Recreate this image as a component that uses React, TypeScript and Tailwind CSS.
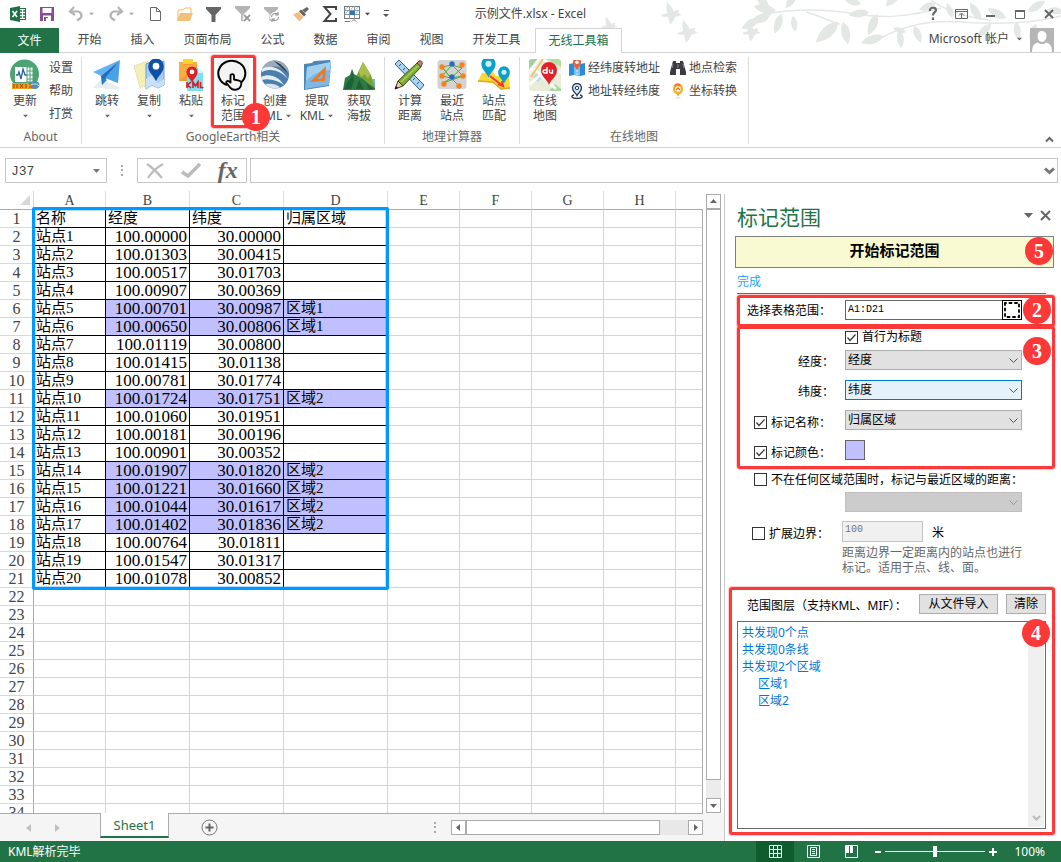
import type { ReactNode } from "react";
import clsx from "clsx";

/* ---------- small shared pieces ---------- */

function Caret({ className = "text-[#666]" }: { className?: string }) {
  return (
    <svg width="7" height="4" viewBox="0 0 7 4" className={className} fill="currentColor" aria-hidden="true">
      <path d="M0 0h7L3.500 4z" />
    </svg>
  );
}

function Badge({ n, className }: { n: number; className: string }) {
  return (
    <span
      className={clsx(
        "absolute z-20 flex size-7 items-center justify-center rounded-full bg-[#fc3838] font-['Liberation_Serif',serif] text-[20px] leading-none font-bold text-white",
        className,
      )}
    >
      {n}
    </span>
  );
}

function Svg({ s = 16, vb, children }: { s?: number; vb?: number; children: ReactNode }) {
  const box = vb ?? s;
  return (
    <svg width={s} height={s} viewBox={`0 0 ${box} ${box}`} fill="none" className="block shrink-0" aria-hidden="true">
      {children}
    </svg>
  );
}

/* ---------- title bar ---------- */

const Funnel = ({ c }: { c: string }) => <path d="M0 1h15v2L9.500 9v7h-4V9L0 3z" fill={c} />;

const qatIcons: { name: string; icon: ReactNode; w: string; caret?: string }[] = [
  {
    name: "Excel",
    w: "w-[30px] pl-[8px]",
    icon: (
      <Svg>
        <rect x="8.500" y="2.500" width="7" height="11" fill="#fff" stroke="#217346" />
        <path d="M10 5h2M13 5h2M10 8h2M13 8h2M10 11h2M13 11h2" stroke="#217346" strokeWidth="1.500" />
        <path d="M0 2l10-2v16L0 14z" fill="#1e7145" />
        <path d="M2.500 5l4.500 6M7 5l-4.500 6" stroke="#fff" strokeWidth="1.600" />
      </Svg>
    ),
  },
  {
    name: "保存",
    w: "w-[30px] pl-[8px]",
    icon: (
      <Svg>
        <path d="M0 1h14v14H0z" fill="#8a4a9e" />
        <path d="M2.500 2h9v5h-9zM3 9.500h8V15H3z" fill="#fff" />
        <path d="M4 11h4v4H4z" fill="#8a4a9e" />
        <path d="M6 12h2v3H6z" fill="#fff" />
      </Svg>
    ),
  },
  {
    name: "撤消",
    w: "w-[40px] pl-[6px]",
    caret: "text-[#aaa]",
    icon: (
      <Svg>
        <path d="M6 1L2 5.500 7 9M2.500 5.500H10a4 4 0 0 1 2 7l-3 2" stroke="#b4b4b4" strokeWidth="2.200" />
      </Svg>
    ),
  },
  {
    name: "恢复",
    w: "w-[39px] pl-[6px]",
    caret: "text-[#aaa]",
    icon: (
      <Svg>
        <path d="M10 1l4 4.500L9 9M13.500 5.500H6a4 4 0 0 0-2 7l3 2" stroke="#b4b4b4" strokeWidth="2.200" />
      </Svg>
    ),
  },
  {
    name: "新建",
    w: "w-[29px] pl-[7px]",
    icon: (
      <Svg>
        <path d="M2.500 1.500h6l4 4v9h-10zM8.500 1.500v4h4" fill="#fff" stroke="#666" />
      </Svg>
    ),
  },
  {
    name: "打开",
    w: "w-[29px] pl-[7px]",
    icon: (
      <Svg>
        <path d="M1 14V4h5l2-2h6v5" fill="#fff" stroke="#f0b869" />
        <path d="M0 15l3-8h13l-3 8z" fill="#f2c078" />
      </Svg>
    ),
  },
  { name: "筛选", w: "w-[29px] pl-[7px]", icon: <Svg><Funnel c="#666" /></Svg> },
  {
    name: "清除筛选",
    w: "w-[29px] pl-[7px]",
    icon: (
      <Svg>
        <path d="M0 0h15v2L9 8v7H6V8L0 2z" fill="#b4b4b4" />
        <path d="M8.500 8.500l6 6M14.500 8.500l-6 6" stroke="#fff" strokeWidth="4" />
        <path d="M9 9l6 6M15 9l-6 6" stroke="#999" strokeWidth="1.800" />
      </Svg>
    ),
  },
  {
    name: "重新应用",
    w: "w-[29px] pl-[7px]",
    icon: (
      <Svg>
        <path d="M0 1h14v2L8.500 8v7h-3V8L0 3z" fill="#b4b4b4" />
        <circle cx="11" cy="11" r="5" fill="#fff" />
        <path d="M7.500 11a3.500 3.500 0 0 1 6-2.500M14.500 11a3.500 3.500 0 0 1-6 2.500M14 6v3h-3M8 16v-3h3" stroke="#999" strokeWidth="1.200" />
      </Svg>
    ),
  },
  {
    name: "格式刷",
    w: "w-[29px] pl-[7px]",
    icon: (
      <Svg>
        <path d="M14 1l2 2-4 4-3-3z" fill="#6a6a6a" />
        <path d="M8 3.500l5 5-2 2-5-5z" fill="#6a5a50" />
        <path d="M5.500 6l5 5-4 4.500L0 8.500z" fill="#f0bd82" />
      </Svg>
    ),
  },
  {
    name: "求和",
    w: "w-[29px] pl-[7px]",
    icon: (
      <Svg>
        <path d="M14 4V1H2.500l6 7-6 7H14v-3" stroke="#444" strokeWidth="2" />
      </Svg>
    ),
  },
  {
    name: "表格",
    w: "w-[29px]",
    caret: "text-[#444]",
    icon: (
      <Svg>
        <rect x="0.500" y="0.500" width="15" height="12" fill="#fff" stroke="#777" />
        <path d="M0 4.500h16M0 8.500h16M5.500 0v13M10.500 0v13" stroke="#8a97a5" />
        <path d="M1 3.500L4 1M6.500 3.500L9.500 1M11.500 3.500L14.500 1M1 7.500L4 5M11.500 7.500L14.500 5" stroke="#8db6dc" />
        <rect x="6" y="5" width="5" height="4" fill="#2e75b6" />
        <path d="M1 15.500h5M8 15.500l2-2 2 2" stroke="#777" />
      </Svg>
    ),
  },
];

const leaves: [number, number, number, number][] = [
  [195, 11, 195, 1], [190, 14, 160, 1], [188, 10, 235, 0.9], [200, 14, 110, 0.9], [212, 16, 85, 0.7], [205, 8, 310, 0.8],
  [178, 18, 150, 0.9], [257, 22, 140, 1.3], [262, 22, 80, 1], [296, 14, 115, 1], [288, 12, 175, 0.9], [280, 4, 200, 0.8],
  [305, 6, 320, 0.9], [302, 36, 165, 1], [318, 30, 85, 0.8], [333, 26, 70, 0.8], [325, 32, 200, 0.6], [355, 3, 160, 0.8],
  [372, 18, 250, 0.7], [400, 20, 240, 0.9], [410, 24, 140, 0.8], [425, 18, 210, 0.9], [435, 22, 85, 0.8], [447, 12, 330, 0.9],
  [466, 10, 10, 0.8], [455, 24, 115, 0.7],
];

const birds: [number, number, number][] = [[28, 26, 0.7], [90, 14, 0.9], [106, 32, 0.9], [170, 32, 0.8]];

function Foliage() {
  return (
    <svg
      className="pointer-events-none absolute top-0 right-0"
      width="480"
      height="50"
      viewBox="0 0 480 50"
      fill="none"
      aria-hidden="true"
    >
      <path d="M185 14c30-6 60-5 90 0s55 2 85-6M300 38c22-12 50-18 80-16s70 2 100-6M225 12c20 6 30 12 34 12M350 0c20 14 40 18 60 20" stroke="#e3e8e5" strokeWidth="1.500" />
      {leaves.map(([x, y, r, s], i) => (
        <path key={i} d="M0 0C5-6 14-7 23-1 15 5 6 5 0 0z" fill="#e3e8e5" transform={`translate(${x} ${y}) rotate(${r}) scale(${s})`} />
      ))}
      {birds.map(([x, y, s], i) => (
        <path
          key={i}
          d="M-11 1L-4-1C-5-5-6-9-4-13-1-10 2-6 3-3L9-5 8-1 12 1 5 3C3 7 1 10-1 12-2 9-3 6-3 3L-9 3z"
          fill="#e3e8e5"
          transform={`translate(${x} ${y}) scale(${s})`}
        />
      ))}
    </svg>
  );
}

function TitleBar() {
  return (
    <div className="relative grid h-7 grid-cols-[1fr_auto_1fr] items-center">
      <div className="flex items-center pl-[2px]">
        {qatIcons.map((q) => (
          <button key={q.name} type="button" aria-label={q.name} className={clsx("flex items-center gap-[4px]", q.w)}>
            {q.icon}
            {q.caret && <span className="scale-75"><Caret className={q.caret} /></span>}
          </button>
        ))}
        <button type="button" aria-label="自定义快速访问工具栏" className="ml-[10px]">
          <svg width="7" height="8" viewBox="0 0 7 8" fill="#555" aria-hidden="true"><path d="M1 0h5v1H1zM0 4h6L3 7z" /></svg>
        </button>
      </div>
      <h1 className="text-[12px] leading-4 text-[#444]">示例文件.xlsx - Excel</h1>
      <div className="flex justify-end text-[#555]">
        <button type="button" aria-label="帮助" className="flex h-4 w-[29px] justify-center">
          <Svg><path d="M5 5V4c0-3 6-3 6 0 0 2.500-3 2-3 5.500M8 11.500V14" stroke="#666" strokeWidth="2.200" /></Svg>
        </button>
        <button type="button" aria-label="功能区显示选项" className="flex h-4 w-[29px] justify-center">
          <Svg><path d="M1.500 3.500h12v9h-12zM1.500 5.500h12M7.500 12V8M5 9.500L7.500 7 10 9.500" stroke="#666" /></Svg>
        </button>
        <button type="button" aria-label="最小化" className="flex h-4 w-[29px] justify-center">
          <Svg><path d="M3 10h9" stroke="#666" strokeWidth="2" /></Svg>
        </button>
        <button type="button" aria-label="最大化" className="flex h-4 w-[29px] justify-center">
          <Svg><path d="M3.500 4.500h9v8h-9z" stroke="#666" /><path d="M3 4h10v2H3z" fill="#666" /></Svg>
        </button>
        <button type="button" aria-label="关闭" className="flex h-4 w-[27px] justify-center">
          <Svg><path d="M5 4l8 8M13 4l-8 8" stroke="#666" strokeWidth="2" /></Svg>
        </button>
      </div>
    </div>
  );
}

const tabs = ["开始", "插入", "页面布局", "公式", "数据", "审阅", "视图", "开发工具"];

function TabRow() {
  return (
    <div className="relative flex h-[25px] text-[12px] leading-4 text-[#444]">
      <button type="button" className="w-[59px] bg-[#217346] text-white">文件</button>
      <div className="flex grow border-b border-[#d4d4d4] pl-[4px]">
        {tabs.map((t) => (
          <button key={t} type="button" className={t.length > 2 ? "w-[77px]" : "w-[53px]"}>{t}</button>
        ))}
        <button type="button" className="-mb-px w-[87px] border border-b-0 border-[#d4d4d4] bg-white text-[#217346]">无线工具箱</button>
        <div className="ml-auto flex items-center">
          <button type="button" className="flex items-center gap-[7px] pb-[2px]">Microsoft 帐户 <span className="scale-75"><Caret /></span></button>
          <svg className="mr-[7px] ml-[7px]" width="24" height="24" viewBox="0 0 24 24" aria-hidden="true">
            <rect width="24" height="24" fill="#b5b5b5" />
            <path d="M12 3c3 0 4.500 2.200 4.500 5S14.500 14 12 14s-4.500-3-4.500-6S9 3 12 3zM2 24c0-6 2-8.500 6-9.500 2 2 6 2 8 0 4 1 6 3.500 6 9.500z" fill="#fff" />
          </svg>
        </div>
      </div>
    </div>
  );
}

/* ---------- ribbon ---------- */

const Pin = ({ x, y, s = 1, c = "#1c9bd7", d = "#fff" }: { x: number; y: number; s?: number; c?: string; d?: string }) => (
  <g transform={`translate(${x} ${y}) scale(${s})`}>
    <path d="M0 16C-2 11-6.500 9-6.500 3.500a6.500 6.500 0 0 1 13 0C6.500 9 2 11 0 16z" fill={c} />
    <circle cx="0" cy="3.500" r="2.800" fill={d} />
  </g>
);

const icons = {
  update: (
    <Svg s={32}>
      <circle cx="15.500" cy="15" r="14.500" fill="#4ba471" />
      <rect x="6" y="8" width="13" height="15" fill="#fff" />
      <path d="M7 16h2l1-3 2 7 2-10 2 6h2" stroke="#2c5f9e" strokeWidth="1.300" />
      <path d="M18 8h6v15h-6zM18 12h6M18 16h6M18 20h6M21 8v15" fill="#fff" stroke="#4ba471" />
      <path d="M3 24h22v6H3z" fill="#f19a1c" />
      <path d="M5 25v4M8 25v4M11 25l3 4M14 25l-3 4M17 25v4M20 25h3M20 28h3" stroke="#8b4d15" />
      <ellipse cx="26" cy="26" rx="4.500" ry="4" fill="#4e8fb5" />
      <path d="M22 26c3-2 6-1 8 1" stroke="#dceaf2" />
    </Svg>
  ),
  plane: (
    <Svg s={32}>
      <path d="M2 29l8-9 20 9zM18 23l12 7H14z" fill="#e7edf2" />
      <path d="M29 1L2 13l8 4z" fill="#62b5f4" />
      <path d="M29 1L10 17l1 9 4-6z" fill="#1f6fb9" />
      <path d="M29 1L14 19l13 5z" fill="#4aa1e8" />
      <path d="M11 26l1-7 4 2z" fill="#2c7fca" />
    </Svg>
  ),
  copy: (
    <Svg s={32}>
      <path d="M1 7l14-5 5 22-13 5z" fill="#f3f0b4" stroke="#cfcf9a" strokeDasharray="1 1" />
      <path d="M13 5l6-2 5 2 7-3v24l-6 3-6-3-6 4z" fill="#a9cdf0" stroke="#6f9fd0" />
      <path d="M13 20l6-4 6 8 6-4v6l-6 3-6-3-6 4z" fill="#c9e0f6" />
      <Pin x={23} y={3} s={1.2} c="#0f51a8" />
    </Svg>
  ),
  paste: (
    <Svg s={32}>
      <path d="M4 3h18v19H4z" fill="#f39a3a" />
      <path d="M4 3h4v3h10V3h4v3L4 22z" fill="#f8ae3f" />
      <path d="M8 0h10v5H8z" fill="#fdd425" />
      <path d="M12 9h11l5 5v18H12z" fill="#7be0f3" />
      <path d="M23 9v5h5z" fill="#d9f7fd" />
      <Pin x={17} y={10} s={0.85} c="#dd1f26" />
      <path d="M12 23v6M16 23l-3.500 3 3.500 3M18 29v-6l2.500 4 2.500-4v6M25.500 23v5.500h3" stroke="#d71920" strokeWidth="1.600" />
    </Svg>
  ),
  hand: (
    <Svg s={32}>
      <rect width="32" height="32" fill="#f3f3f3" />
      <path d="M10 26A13.500 12.500 0 1 1 24 23.500" stroke="#000" strokeWidth="2" />
      <path d="M13.500 23.500v-6.500c0-2.500 3.500-2.500 3.500 0v3.500l5 1.200c2.500.8 2.800 2.300 1.800 5.300-1.300 4-7.300 5-10.300 2l-4-5c-1-2 1.500-3 4-.5z" stroke="#000" strokeWidth="1.800" strokeLinejoin="round" />
    </Svg>
  ),
  earth: (
    <Svg s={32}>
      <circle cx="16" cy="15.500" r="14" fill="#4a7fae" />
      <path d="M2 14C4 5 10 1 16 1.500 24 2 29 7 30 14 20 4 9 7 2 14z" fill="#9dabb8" />
      <path d="M3 10c8-5 19-1 26 10-8-9-18-11-26-7z" fill="#e6eef5" />
      <path d="M2 18c8-4 17-1 23 8-7-5-16-7-22-5z" fill="#e6eef5" />
      <path d="M6 25c6-1 11 0 15 3-5 3-12 1-15-3z" fill="#dbe7f0" />
      <path d="M15 2c6 2 11 7 14 12l-6-5z" fill="#24364a" />
    </Svg>
  ),
  extract: (
    <Svg s={32}>
      <path d="M3 5l8-1 2-2 16-1 1 4-2 22-25 4z" fill="#4c87b5" />
      <path d="M6 8l24-5-2 23-24 4z" fill="#7fb8e4" />
      <path d="M6 8l24-5-1 8C18 12 10 16 5 22z" fill="#a0cff0" />
      <path fillRule="evenodd" d="M25 7L9 23l15-1zM22 14l-1 5.500-5 .5z" fill="#e87a28" />
    </Svg>
  ),
  mountain: (
    <Svg s={32}>
      <path d="M17 20h15v9l-15 1z" fill="#6dc1de" />
      <path d="M20 3l8 13 4 12H8z" fill="#7da238" />
      <path d="M20 3l-4 10 2 5 4-3 3 5 2-5z" fill="#a9c04a" />
      <path d="M9 10l2 5 5 3 4 2 6 5 6 4v2H0l2-12 5-3z" fill="#2d7a43" />
      <path d="M9 10l-1 9-4 5-3 6h7l3-8zM16 21l-3 9h8zM24 24l1 6h5z" fill="#1f6136" />
    </Svg>
  ),
  ruler: (
    <Svg s={32}>
      <path d="M1 5l4-4 25 25-4 5z" fill="#a8d3f3" stroke="#2c5c88" />
      <path d="M5 7l2-2M9 11l2-2M13 15l2-2M19 21l2-2M23 25l2-2" stroke="#2c5c88" />
      <path d="M4 22L23 4l4 4L9 27z" fill="#7cab2e" stroke="#3b4a1a" />
      <path d="M23 4l2-2c2-1 4 1 3 3l-1 3z" fill="#c98258" stroke="#543" />
      <path d="M4 22l-3 8 8-3z" fill="#edc7a0" stroke="#333" />
      <path d="M2 27l-1 3 3-1z" fill="#111" />
      <path d="M7 23L24 7" stroke="#a8ce5c" strokeWidth="1.500" />
    </Svg>
  ),
  network: (
    <Svg s={32}>
      <rect x="1.500" y="1" width="29" height="29" rx="3" fill="#d3d3d3" />
      <path d="M6 8l10-2 10 3M6 8l9 11 11-10M16 6L6 17l9 2 12-2M16 6l11 11-20 7 8-5 8 8M6 8l9 11" stroke="#5aa83c" strokeWidth="1" />
      <g fill="#f5811f"><circle cx="6" cy="8" r="2.700" /><circle cx="26" cy="6" r="2.700" /><circle cx="6" cy="17" r="2.700" /><circle cx="27" cy="17" r="2.700" /><circle cx="8" cy="25" r="2.700" /><circle cx="23" cy="27" r="2.700" /></g>
      <g fill="#1f6fc5"><circle cx="16" cy="5" r="2.700" /><circle cx="16" cy="18" r="2.700" /></g>
    </Svg>
  ),
  match: (
    <Svg s={32}>
      <path d="M4 14l11-1 3 4 13-1 1 13-9 2-8-7-15-2z" fill="#fdd835" />
      <path d="M0 22l15 1 8 7 9-1" stroke="#e0aa20" strokeWidth="1.500" />
      <path d="M12 17l13 10M20 25l5 2-1-5" stroke="#e8403a" strokeWidth="2.200" />
      <Pin x={10.500} y={1} s={1.100} c="#0aa0c9" d="#cdf0fa" />
      <Pin x={26} y={10} s={0.900} c="#0aa0c9" d="#cdf0fa" />
    </Svg>
  ),
  online: (
    <Svg s={32}>
      <rect width="32" height="32" rx="2" fill="#e9ecd8" />
      <path d="M0 3c0-2 1-3 3-3h6L0 10z" fill="#9fd2a0" />
      <path d="M17 0h12c2 0 3 1 3 3v5z" fill="#b5dfa0" />
      <path d="M20 32l6-7 6 5v2z" fill="#a5d99a" />
      <path d="M4 18l5-6 5 5-5 6z" fill="#b9d8f2" />
      <path d="M10 0L0 14M5 10l22 20M0 26l16-14M14 0l18 14" stroke="#fff" strokeWidth="2.500" />
      <path d="M14 0L2 18" stroke="#f3bf52" strokeWidth="1.500" />
      <path d="M20 26c-2-6-8-8-8-15a8 8 0 0 1 16 0c0 7-6 9-8 15z" fill="#e0232b" />
      <path d="M18 8v6h-2.500a1.500 1.500 0 0 1 0-3H18M20.500 10.500V13c0 1 1 1 2 1h1v-3.500" stroke="#fff" strokeWidth="1.400" />
    </Svg>
  ),
  mapPin: (
    <Svg>
      <path d="M0 4l5-1 6 1 5-1v12l-5 1-6-1-5 1z" fill="#2b8cd6" />
      <path d="M5 3l6 1v12l-6-1z" fill="#79c0ee" />
      <path d="M8 4v12" stroke="#eef" strokeDasharray="2 1" />
      <Pin x={8} y={0} s={0.620} c="#e9603c" />
    </Svg>
  ),
  geo: (
    <Svg>
      <path d="M8 12.500C7 10 3.500 8.500 3.500 5a4.500 4.500 0 0 1 9 0c0 3.500-3.500 5-4.500 7.500z" fill="#cfe6fa" stroke="#2a3b55" strokeWidth="1.300" />
      <circle cx="8" cy="5" r="1.700" fill="#fff" stroke="#2a3b55" />
      <path d="M5 12c-4 1-2 3.500 3 3.500s7-2.500 3-3.500" stroke="#2a3b55" strokeWidth="1.300" />
    </Svg>
  ),
  binoculars: (
    <Svg>
      <path d="M3 1h3v2h4V1h3l3 11v3h-6V9H6v6H0v-3z" fill="#3c3c40" />
      <path d="M2 8l1-4M14 8l-1-4M8 4v4" stroke="#8a8a92" />
    </Svg>
  ),
  convert: (
    <Svg>
      <path d="M8 13.500l-2.500-4h5z" fill="#f5a623" />
      <circle cx="8" cy="6" r="4" fill="#fff" stroke="#f6b02b" strokeWidth="2.400" />
      <path d="M4.500 3a4.500 4.500 0 0 1 6-.5" stroke="#ee7b1f" strokeWidth="2.200" />
      <path d="M6 7l2-2 2 2" stroke="#ee6b1f" strokeWidth="1.400" />
      <ellipse cx="8" cy="15" rx="3" ry="0.700" fill="#ddd" />
    </Svg>
  ),
};

function BigButton({ icon, label, second, caret }: { icon: ReactNode; label: string; second?: string; caret?: boolean }) {
  return (
    <button type="button" className="flex w-[42px] flex-col items-center">
      {icon}
      <span className="mt-[2px] whitespace-nowrap">{label}</span>
      <span className="flex h-[15px] items-center gap-[3px] whitespace-nowrap">
        {second}
        {caret && <span className="scale-75"><Caret /></span>}
      </span>
    </button>
  );
}

function Group({ title, className, children }: { title: string; className?: string; children: ReactNode }) {
  return (
    <section className={clsx("my-[4px] flex h-[87px] flex-col border-r border-[#dcdcdc] px-[4px]", className)}>
      <div className="flex grow pt-[2px]">{children}</div>
      <h2 className="text-center leading-[14px] text-[#666]">{title}</h2>
    </section>
  );
}

function SmallButton({ icon, label }: { icon: ReactNode; label: string }) {
  return (
    <button type="button" className="flex h-[17px] items-center gap-[3px] whitespace-nowrap">
      {icon}
      {label}
    </button>
  );
}

function Ribbon() {
  return (
    <div className="relative flex h-[95px] border-b border-[#d4d4d4] text-[12px] leading-[15px] text-[#444]">
      <Group title="About" className="w-[82px]">
        <BigButton icon={icons.update} label="更新" caret />
        <div className="flex flex-col gap-[8px] pt-[1px] pl-[3px]">
          <button type="button">设置</button>
          <button type="button">帮助</button>
          <button type="button">打赏</button>
        </div>
      </Group>
      <Group title="GoogleEarth相关" className="w-[303px]">
        <BigButton icon={icons.plane} label="跳转" caret />
        <BigButton icon={icons.copy} label="复制" caret />
        <BigButton icon={icons.paste} label="粘贴" caret />
        <div className="relative">
          <BigButton icon={icons.hand} label="标记" second="范围" />
          <span className="absolute -top-[4px] -left-[1px] h-[73px] w-[45px] rounded-[3px] border-3 border-[#fc3838] ring-1 ring-[#fc3838]/25" />
          <Badge n={1} className="top-[44px] left-[30px]" />
        </div>
        <BigButton icon={icons.earth} label="创建" second="KML" caret />
        <BigButton icon={icons.extract} label="提取" second="KML" caret />
        <BigButton icon={icons.mountain} label="获取" second="海拔" />
      </Group>
      <Group title="地理计算器" className="w-[135px]">
        <BigButton icon={icons.ruler} label="计算" second="距离" />
        <BigButton icon={icons.network} label="最近" second="站点" />
        <BigButton icon={icons.match} label="站点" second="匹配" />
      </Group>
      <Group title="在线地图" className="w-[229px]">
        <BigButton icon={icons.online} label="在线" second="地图" />
        <div className="ml-[3px] flex gap-[10px]">
          <div className="flex flex-col gap-[6px]">
            <SmallButton icon={icons.mapPin} label="经纬度转地址" />
            <SmallButton icon={icons.geo} label="地址转经纬度" />
          </div>
          <div className="flex flex-col gap-[6px]">
            <SmallButton icon={icons.binoculars} label="地点检索" />
            <SmallButton icon={icons.convert} label="坐标转换" />
          </div>
        </div>
      </Group>
      <button type="button" aria-label="折叠功能区" className="mt-auto mr-[7px] mb-[4px] ml-auto">
        <svg width="9" height="7" viewBox="0 0 9 7" fill="none" aria-hidden="true"><path d="M1 5.500L4.500 2 8 5.500" stroke="#666" strokeWidth="2" /></svg>
      </button>
    </div>
  );
}

/* ---------- formula bar ---------- */

function Dots() {
  return (
    <svg width="2" height="11" viewBox="0 0 2 11" fill="#aaa" className="shrink-0" aria-hidden="true">
      <path d="M0 0h2v2H0zM0 4h2v2H0zM0 9h2v2H0z" />
    </svg>
  );
}

function FormulaBar() {
  return (
    <div className="flex h-[43px] items-start pt-[10px] pr-[3px] pl-[5px]">
      <div className="flex h-[25px] w-[102px] items-center border border-[#c6c6c6] pr-[6px] pl-[5px]">
        <input aria-label="名称框" defaultValue="J37" className="w-full min-w-0 pt-[2px] font-['Liberation_Mono',monospace] text-[13px] leading-4 text-[#444] outline-none" />
        <Caret className="shrink-0 text-[#777]" />
      </div>
      <div className="flex h-[25px] w-[30px] items-center justify-center"><Dots /></div>
      <div className="flex h-[25px] w-[110px] items-center justify-around border border-[#c6c6c6]">
        <button type="button" aria-label="取消"><svg width="18" height="16" viewBox="0 0 18 16" fill="none" aria-hidden="true"><path d="M1 1c6 4 11 9 15 14M17 1C10 5 5 10 2 15" stroke="#bcbcbc" strokeWidth="2.200" /></svg></button>
        <button type="button" aria-label="输入"><svg width="20" height="16" viewBox="0 0 20 16" fill="none" aria-hidden="true"><path d="M1 9l6 4L19 1" stroke="#bcbcbc" strokeWidth="3.500" /></svg></button>
        <button type="button" aria-label="插入函数" className="pb-[2px] font-['Liberation_Serif',serif] text-[24px] leading-[22px] font-bold text-[#666] italic">fx</button>
      </div>
      <div className="ml-[3px] flex h-[25px] grow items-center border border-[#c6c6c6] pr-[2px]">
        <input aria-label="编辑栏" className="min-w-0 grow px-1 text-[13px] outline-none" />
        <svg width="11" height="8" viewBox="0 0 11 8" fill="none" aria-hidden="true"><path d="M1 1.500l4.500 4L10 1.500" stroke="#777" strokeWidth="3" /></svg>
      </div>
    </div>
  );
}

/* ---------- worksheet ---------- */

const stations: [string, string, string][] = [
  ["100.00000", "30.00000", ""],
  ["100.01303", "30.00415", ""],
  ["100.00517", "30.01703", ""],
  ["100.00907", "30.00369", ""],
  ["100.00701", "30.00987", "区域1"],
  ["100.00650", "30.00806", "区域1"],
  ["100.01119", "30.00800", ""],
  ["100.01415", "30.01138", ""],
  ["100.00781", "30.01774", ""],
  ["100.01724", "30.01751", "区域2"],
  ["100.01060", "30.01951", ""],
  ["100.00181", "30.00196", ""],
  ["100.00901", "30.00352", ""],
  ["100.01907", "30.01820", "区域2"],
  ["100.01221", "30.01660", "区域2"],
  ["100.01044", "30.01617", "区域2"],
  ["100.01402", "30.01836", "区域2"],
  ["100.00764", "30.01811", ""],
  ["100.01547", "30.01317", ""],
  ["100.01078", "30.00852", ""],
];

const columns = ["A", "B", "C", "D", "E", "F", "G", "H", ""];
const colWidths = ["w-[34px]", "w-[72px]", "w-[84px]", "w-[94px]", "w-[104px]", "w-[72px]", "w-[72px]", "w-[72px]", "w-[72px]", ""];

function rowValues(r: number): string[] {
  if (r === 1) return ["名称", "经度", "纬度", "归属区域"];
  const s = stations[r - 2];
  return s ? [`站点${r - 1}`, ...s] : [];
}

function Sheet() {
  return (
    <div className="relative min-h-0 grow overflow-hidden">
      <table className="w-full table-fixed border-separate border-spacing-0 font-['Liberation_Serif','Noto_Sans_CJK_SC',serif]">
        <colgroup>{colWidths.map((w, i) => <col key={i} className={w} />)}</colgroup>
        <thead>
          <tr className="text-[14px] leading-[16px] text-[#444]">
            <th className="border-r border-b border-[#d8d8d8] border-b-[#ababab] p-0">
              <svg className="mr-[3px] ml-auto" width="10" height="10" viewBox="0 0 10 10" fill="#d8d8d8" aria-hidden="true"><path d="M10 0v10H0z" /></svg>
            </th>
            {columns.map((c, i) => (
              <th key={i} scope="col" className={clsx("border-b border-b-[#ababab] p-0 pt-[2px] font-normal", i < 8 && "border-r border-r-[#dcdcdc]")}>{c}</th>
            ))}
          </tr>
        </thead>
        <tbody>
          {Array.from({ length: 34 }, (_, k) => k + 1).map((r) => {
            const values = rowValues(r);
            const marked = Boolean(r > 1 && values[3]);
            return (
              <tr key={r} className="h-[18px] text-[15px] leading-[17px] text-black">
                <th scope="row" className="border-r border-b border-[#d8d8d8] border-r-[#ababab] p-0 text-[16px] font-normal text-[#444]">{r}</th>
                {columns.map((_, i) => {
                  const filled = i < values.length;
                  const numeric = r > 1 && (i === 1 || i === 2);
                  return (
                    <td
                      key={i}
                      className={clsx(
                        "h-[18px] border-r border-b p-0 whitespace-nowrap",
                        filled ? "border-black" : i === 8 ? "border-[#d4d4d4] border-r-[#ababab]" : "border-[#d4d4d4]",
                        numeric ? "pr-[2px] text-right text-[17px]" : "pl-[2px]",
                        marked && i > 0 && filled && "bg-[#c0c0ff]",
                      )}
                    >
                      {values[i]}
                    </td>
                  );
                })}
              </tr>
            );
          })}
        </tbody>
      </table>
      <span className="pointer-events-none absolute top-[16px] left-[32px] h-[383px] w-[357px] rounded-[2px] border-3 border-[#0099ff] ring-1 ring-[#0099ff]/30 ring-inset" />
    </div>
  );
}

function ScrollButton({ label, d }: { label: string; d: string }) {
  return (
    <button type="button" aria-label={label} className="flex size-[15px] shrink-0 items-center justify-center border border-[#ababab] bg-white">
      <svg width="7" height="7" viewBox="0 0 7 7" fill="#666" aria-hidden="true"><path d={d} /></svg>
    </button>
  );
}

function SheetTabs() {
  return (
    <div className="flex h-[28px] shrink-0 bg-[#f5f5f5]">
      <div className="flex w-[100px] items-center gap-[24px] border-t border-[#ababab] pl-[26px]">
        <button type="button" aria-label="上一个工作表"><svg width="5" height="8" viewBox="0 0 5 8" fill="#c0c0c0" aria-hidden="true"><path d="M5 0v8L0 4z" /></svg></button>
        <button type="button" aria-label="下一个工作表"><svg width="5" height="8" viewBox="0 0 5 8" fill="#c0c0c0" aria-hidden="true"><path d="M0 0v8l5-4z" /></svg></button>
      </div>
      <button type="button" className="mb-[3px] w-[69px] border-x border-b-2 border-[#ababab] border-b-[#217346] bg-white text-[13px] leading-4 text-[#217346]">Sheet1</button>
      <div className="flex grow items-center border-t border-[#ababab]">
        <button type="button" aria-label="新工作表" className="ml-[32px]">
          <Svg s={17}><circle cx="8.500" cy="8.500" r="7.500" stroke="#777" /><path d="M8.500 4.500v8M4.500 8.500h8" stroke="#666" strokeWidth="2" /></Svg>
        </button>
        <div className="ml-auto flex w-[269px] items-center">
          <Dots />
          <div className="ml-[15px] flex grow items-center">
            <ScrollButton label="向左滚动" d="M5 0v7L1 3.500z" />
            <div className="flex h-[15px] grow bg-[#e8e8e8]"><div className="w-[194px] border border-[#ababab] bg-white" /></div>
            <ScrollButton label="向右滚动" d="M2 0v7l4-3.500z" />
          </div>
        </div>
      </div>
      <div className="w-[21px]" />
    </div>
  );
}

/* ---------- task pane ---------- */

function CheckBox({ id, checked = false, label }: { id: string; checked?: boolean; label: string }) {
  return (
    <span className="flex items-center gap-[4px]">
      <span className="relative flex size-[13px] shrink-0">
        <input id={id} type="checkbox" defaultChecked={checked} className="peer size-[13px] appearance-none border border-[#333] bg-white" />
        <svg className="pointer-events-none absolute inset-0 hidden peer-checked:block" width="13" height="13" viewBox="0 0 13 13" fill="none" aria-hidden="true"><path d="M2.500 6.500L5 9.500 10.500 3.500" stroke="#333" strokeWidth="1.200" /></svg>
      </span>
      <label htmlFor={id} className="whitespace-nowrap">{label}</label>
    </span>
  );
}

function DropDown({ id, label, value, className, disabled }: { id: string; label?: string; value: string; className: string; disabled?: boolean }) {
  return (
    <span className="relative flex w-[177px]">
      <select id={id} aria-label={label} disabled={disabled} className={clsx("h-[20px] w-full appearance-none border px-[2px] text-[12px] leading-[16px] text-black outline-none", className)}>
        <option>{value}</option>
      </select>
      <svg className="pointer-events-none absolute top-[8px] right-[4px]" width="9" height="6" viewBox="0 0 9 6" fill="none" aria-hidden="true"><path d="M0.500 0.500l4 4 4-4" stroke={disabled ? "#999" : "#555"} /></svg>
    </span>
  );
}

const frame = "relative rounded-[3px] border-3 border-[#fc3838] ring-1 ring-[#fc3838]/25";
const row = "flex h-[20px] items-center";
const rowLabel = "w-[94px] pt-[4px] mr-[11px] text-right";
const rowCheck = "w-[94px] pt-[6px] mr-[11px] pl-[14px]";

function TaskPane() {
  return (
    <aside className="mt-[3px] flex w-[337px] shrink-0 flex-col border-l border-[#c8c8c8] text-[12px] leading-[16px] text-black">
      <header className="flex h-[42px] items-center pt-[5px] pr-[10px] pl-[12px]">
        <h2 className="text-[21px] leading-[28px] text-[#217346]">标记范围</h2>
        <button type="button" aria-label="窗格选项" className="mb-[3px] ml-auto"><svg width="9" height="5" viewBox="0 0 9 5" fill="#666" aria-hidden="true"><path d="M0 0h9L4.500 5z" /></svg></button>
        <button type="button" aria-label="关闭窗格" className="mb-[3px] ml-[7px]"><svg width="11" height="11" viewBox="0 0 11 11" fill="none" aria-hidden="true"><path d="M1 1l9 9M10 1l-9 9" stroke="#666" strokeWidth="2" /></svg></button>
      </header>
      <div className="relative mr-[7px] ml-[10px]">
        <button type="button" className="block h-[32px] w-full border border-[#808080] bg-[#fafad2] pb-[3px] text-[15px] leading-[20px] font-bold">开始标记范围</button>
        <Badge n={5} className="top-[1px] right-[1px]" />
      </div>
      <p className="mr-[15px] ml-[12px] h-[26px] border-b border-[#12a02c] pt-[6px] text-[#1e9fff]">完成</p>

      <div className={clsx(frame, "mt-px mr-[6px] ml-[12px] h-[32px]")}>
        <div className="flex h-[24px] items-center gap-[13px]">
          <label htmlFor="range" className="w-[92px] pt-[2px] pl-[7px] whitespace-nowrap">选择表格范围：</label>
          <div className="flex h-[20px] w-[177px]">
            <input id="range" defaultValue="A1:D21" className="min-w-0 grow border border-r-0 border-[#666] bg-white px-[2px] font-['Liberation_Mono',monospace] text-[10px] leading-[14px] outline-none" />
            <button type="button" aria-label="选择区域" className="flex size-[20px] items-center justify-center border border-black">
              <Svg><path d="M1 1h14v14H1z" stroke="#000" strokeWidth="1.800" strokeDasharray="3.500 2" strokeDashoffset="1.750" /></Svg>
            </button>
          </div>
        </div>
        <Badge n={2} className="-top-[2px] right-[1px]" />
      </div>

      <div className={clsx(frame, "-mt-px mr-[6px] ml-[12px] flex flex-col pb-[6px]")}>
        <div className="flex h-[17px] items-center pl-[105px]"><CheckBox id="header" checked label="首行为标题" /></div>
        <div className="mt-[4px] flex flex-col gap-[10px]">
          <div className={row}>
            <label htmlFor="lng" className={rowLabel}>经度：</label>
            <DropDown id="lng" value="经度" className="border-[#adadad] bg-[#e1e1e1]" />
          </div>
          <div className={row}>
            <label htmlFor="lat" className={rowLabel}>纬度：</label>
            <DropDown id="lat" value="纬度" className="border-[#0078d7] bg-[#e5f1fb]" />
          </div>
          <div className={row}>
            <div className={rowCheck}><CheckBox id="markName" checked label="标记名称：" /></div>
            <DropDown id="name" label="标记名称列" value="归属区域" className="border-[#adadad] bg-[#e1e1e1]" />
          </div>
          <div className={row}>
            <div className={rowCheck}><CheckBox id="markColor" checked label="标记颜色：" /></div>
            <button type="button" aria-label="颜色" className="size-[20px] border border-[#666] bg-[#c0c0ff]" />
          </div>
        </div>
        <Badge n={3} className="top-[8px] right-[1px]" />
      </div>

      <div className="mt-px flex h-[20px] items-center pl-[29px]"><CheckBox id="nearest" label="不在任何区域范围时，标记与最近区域的距离：" /></div>
      <div className="mt-[2px] pl-[120px]"><DropDown id="distance" label="距离列" value="" disabled className="border-[#bfbfbf] bg-[#cccccc]" /></div>
      <div className="mt-[9px] flex h-[21px] pl-[27px]">
        <div className="w-[90px] pt-[5px]"><CheckBox id="extend" label="扩展边界：" /></div>
        <input aria-label="扩展边界距离" disabled defaultValue="100" className="h-[21px] w-[81px] border border-[#c4c4c4] bg-[#f0f0f0] px-[2px] pb-[3px] font-['Liberation_Mono',monospace] text-[10px] text-[#777]" />
        <span className="pt-[4px] pl-[9px]">米</span>
      </div>
      <p className="mt-[3px] w-[300px] pl-[117px] leading-[15px] text-[#666]">距离边界一定距离内的站点也进行标记。适用于点、线、面。</p>

      <div className={clsx(frame, "mt-[12px] mr-[6px] mb-[6px] ml-[4px] flex grow flex-col pt-[4px] pr-[6px] pb-[3px] pl-[5px]")}>
        <div className="flex items-start">
          <h3 className="pt-[4px] pl-[10px] whitespace-nowrap">范围图层（支持KML、MIF）：</h3>
          <button type="button" className="ml-auto h-[20px] w-[79px] shrink-0 border border-[#adadad] bg-[#e1e1e1]">从文件导入</button>
          <button type="button" className="ml-[8px] h-[20px] w-[40px] shrink-0 border border-[#adadad] bg-[#e1e1e1]">清除</button>
        </div>
        <div className="mt-[7px] flex grow border border-[#6b6b6b] bg-white">
          <ul className="grow pt-[2px] pl-[4px] leading-[17px] text-[#0078d7]">
            <li>共发现0个点</li>
            <li>共发现0条线</li>
            <li>共发现2个区域</li>
            <li className="pl-[16px]">区域1</li>
            <li className="pl-[16px]">区域2</li>
          </ul>
          <div className="m-px flex w-[16px] flex-col justify-end bg-[#f0f0f0] px-[4px] pb-[6px]">
            <svg width="9" height="6" viewBox="0 0 9 6" fill="none" aria-hidden="true"><path d="M1 1l3.500 3.500L8 1" stroke="#bbb" strokeWidth="2" /></svg>
          </div>
        </div>
        <Badge n={4} className="top-[29px] right-[2px]" />
      </div>
    </aside>
  );
}

/* ---------- status bar ---------- */

function StatusBar() {
  return (
    <footer className="flex h-[21px] shrink-0 items-center bg-[#217346] pr-[16px] pl-[8px] text-[12px] leading-4 text-white">
      <span>KML解析完毕</span>
      <button type="button" aria-label="普通视图" className="ml-auto flex h-[21px] w-[38px] items-center justify-center bg-[#0f5c2f]">
        <Svg s={13}><path d="M0.500 0.500h12v12H0.500zM4.500 0v13M8.500 0v13M0 4.500h13M0 8.500h13" stroke="#fff" /></Svg>
      </button>
      <button type="button" aria-label="页面布局视图" className="flex w-[38px] justify-center">
        <Svg s={13}><path d="M0.500 0.500h12v12H0.500zM3.500 2.500h6v8h-6zM5 4.500h3M5 6.500h3M5 8.500h3" stroke="#fff" /></Svg>
      </button>
      <button type="button" aria-label="分页预览" className="flex w-[38px] justify-center">
        <Svg s={13}><path d="M0.500 0.500h12v12H0.500z" stroke="#fff" /><path d="M1 1h3v7H1zM5 1h3v7H5z" fill="#fff" /></Svg>
      </button>
      <button type="button" aria-label="缩小" className="ml-[5px]"><Svg s={6}><path d="M0 3h6" stroke="#fff" strokeWidth="2" /></Svg></button>
      <input
        type="range"
        aria-label="缩放"
        defaultValue={50}
        className="mx-[4px] h-[12px] w-[100px] appearance-none bg-transparent bg-[linear-gradient(#fff,#fff)] bg-[length:100%_1px] bg-center bg-no-repeat [&::-webkit-slider-thumb]:h-[11px] [&::-webkit-slider-thumb]:w-[4px] [&::-webkit-slider-thumb]:appearance-none [&::-webkit-slider-thumb]:bg-white"
      />
      <button type="button" aria-label="放大"><Svg s={8}><path d="M0 4h8M4 0v8" stroke="#fff" strokeWidth="2" /></Svg></button>
      <span className="ml-[17px]">100%</span>
    </footer>
  );
}

export default function App() {
  return (
    <div className="flex h-screen min-h-[720px] flex-col overflow-hidden bg-white font-['Noto_Sans','Noto_Sans_CJK_SC',sans-serif]">
      <div className="relative">
        <Foliage />
        <TitleBar />
        <TabRow />
      </div>
      <Ribbon />
      <FormulaBar />
      <main className="flex min-h-0 grow">
        <div className="flex min-w-0 grow flex-col">
          <div className="flex min-h-0 grow">
            <Sheet />
            <div className="mt-[3px] mr-[3px] ml-[3px] flex w-[15px] shrink-0 flex-col bg-[#ececec]">
              <ScrollButton label="向上滚动" d="M0 5h7L3.500 1z" />
              <div className="h-[571px] min-h-0 shrink border border-[#ababab] bg-white" />
              <div className="grow" />
              <ScrollButton label="向下滚动" d="M0 2h7L3.500 6z" />
            </div>
          </div>
          <SheetTabs />
        </div>
        <TaskPane />
      </main>
      <StatusBar />
    </div>
  );
}
